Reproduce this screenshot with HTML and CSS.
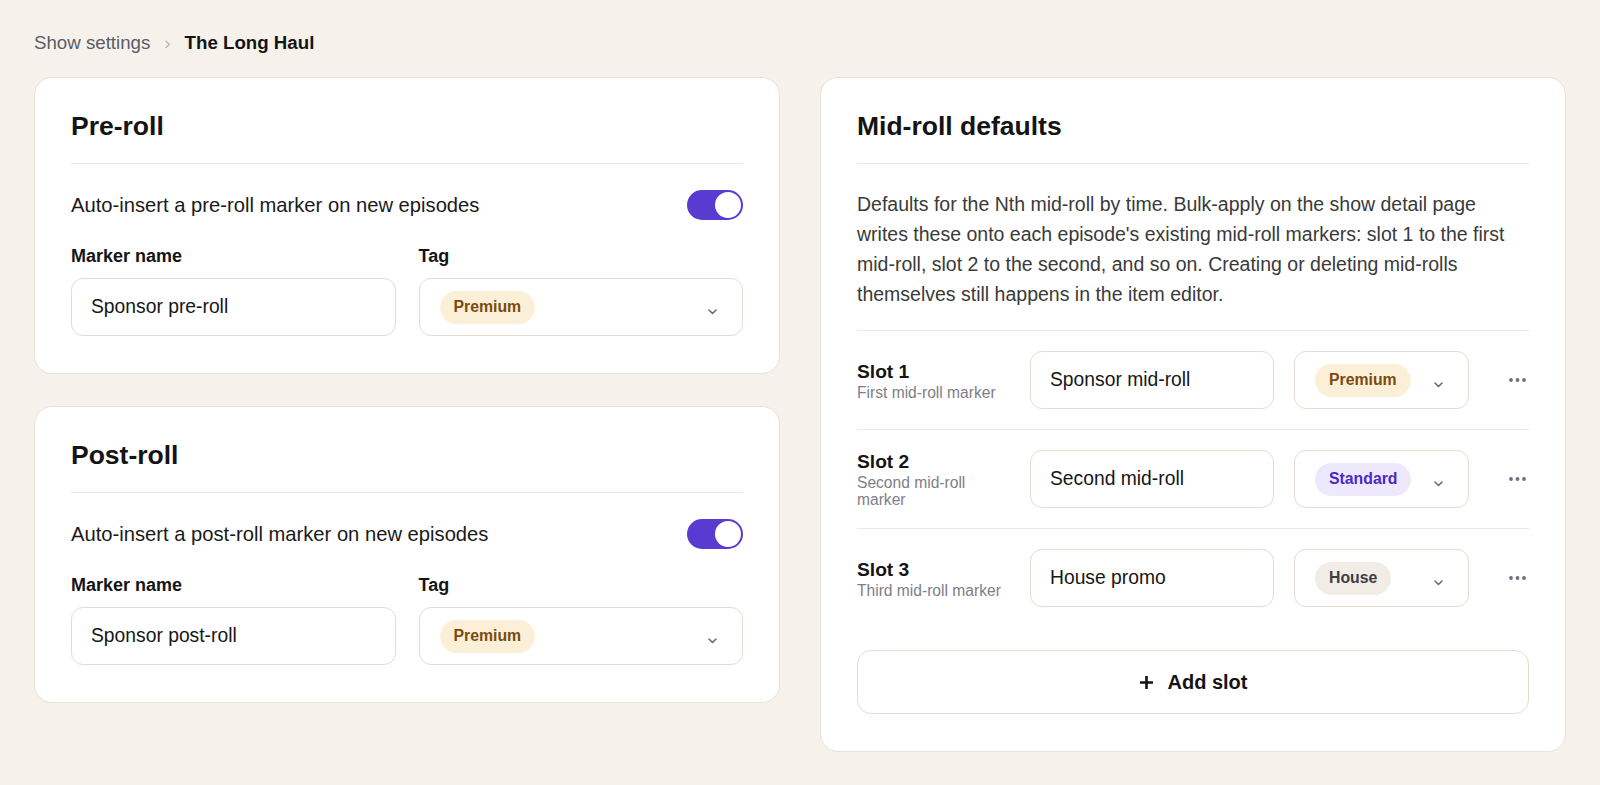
FILE: index.html
```html
<!DOCTYPE html>
<html lang="en">
<head>
    <meta charset="UTF-8">
    <meta name="viewport" content="width=device-width, initial-scale=1.0">
    <title>The Long Haul - Show settings</title>
    <link rel="stylesheet" href="styles.css">
</head>
<body>
    <div class="page">
        <nav class="crumbs">
            <a class="crumb-link" href="#">Show settings</a>
            <span class="crumb-sep">›</span>
            <span class="crumb-current">The Long Haul</span>
        </nav>

        <div class="columns">
            <div class="stack">
                <section class="card">
                    <div class="card-head">
                        <h2>Pre-roll</h2>
                    </div>
                    <div class="toggle-row">
                        <span>Auto-insert a pre-roll marker on new episodes</span>
                        <button class="toggle on" type="button"><span class="knob"></span></button>
                    </div>
                    <div class="field-grid">
                        <div class="field">
                            <label for="preName">Marker name</label>
                            <input type="text" id="preName" class="text-input" value="Sponsor pre-roll">
                        </div>
                        <div class="field">
                            <label>Tag</label>
                            <div class="select">
                                <span class="pill premium">Premium</span>
                                <svg class="chev" width="9" height="6" viewBox="0 0 9 6"><path d="M1 1l3.5 3.5L8 1" fill="none" stroke="currentColor" stroke-width="1.6" stroke-linecap="round" stroke-linejoin="round"/></svg>
                            </div>
                        </div>
                    </div>
                </section>

                <section class="card">
                    <div class="card-head">
                        <h2>Post-roll</h2>
                    </div>
                    <div class="toggle-row">
                        <span>Auto-insert a post-roll marker on new episodes</span>
                        <button class="toggle on" type="button"><span class="knob"></span></button>
                    </div>
                    <div class="field-grid">
                        <div class="field">
                            <label for="postName">Marker name</label>
                            <input type="text" id="postName" class="text-input" value="Sponsor post-roll">
                        </div>
                        <div class="field">
                            <label>Tag</label>
                            <div class="select">
                                <span class="pill premium">Premium</span>
                                <svg class="chev" width="9" height="6" viewBox="0 0 9 6"><path d="M1 1l3.5 3.5L8 1" fill="none" stroke="currentColor" stroke-width="1.6" stroke-linecap="round" stroke-linejoin="round"/></svg>
                            </div>
                        </div>
                    </div>
                </section>
            </div>

            <section class="card">
                <div class="card-head">
                    <h2>Mid-roll defaults</h2>
                </div>
                <p class="intro">Defaults for the Nth mid-roll by time. Bulk-apply on the show detail page writes these onto each episode's existing mid-roll markers: slot 1 to the first mid-roll, slot 2 to the second, and so on. Creating or deleting mid-rolls themselves still happens in the item editor.</p>

                <div class="slots">
                    <div class="slot">
                        <div class="slot-label">
                            <strong>Slot 1</strong>
                            <small>First mid-roll marker</small>
                        </div>
                        <input type="text" class="text-input" value="Sponsor mid-roll">
                        <div class="select">
                            <span class="pill premium">Premium</span>
                            <svg class="chev" width="9" height="6" viewBox="0 0 9 6"><path d="M1 1l3.5 3.5L8 1" fill="none" stroke="currentColor" stroke-width="1.6" stroke-linecap="round" stroke-linejoin="round"/></svg>
                        </div>
                        <button class="more" type="button">
                            <svg width="17" height="4" viewBox="0 0 17 4"><circle cx="2" cy="2" r="1.9"/><circle cx="8.5" cy="2" r="1.9"/><circle cx="15" cy="2" r="1.9"/></svg>
                        </button>
                    </div>
                    <div class="slot">
                        <div class="slot-label">
                            <strong>Slot 2</strong>
                            <small>Second mid-roll marker</small>
                        </div>
                        <input type="text" class="text-input" value="Second mid-roll">
                        <div class="select">
                            <span class="pill standard">Standard</span>
                            <svg class="chev" width="9" height="6" viewBox="0 0 9 6"><path d="M1 1l3.5 3.5L8 1" fill="none" stroke="currentColor" stroke-width="1.6" stroke-linecap="round" stroke-linejoin="round"/></svg>
                        </div>
                        <button class="more" type="button">
                            <svg width="17" height="4" viewBox="0 0 17 4"><circle cx="2" cy="2" r="1.9"/><circle cx="8.5" cy="2" r="1.9"/><circle cx="15" cy="2" r="1.9"/></svg>
                        </button>
                    </div>
                    <div class="slot">
                        <div class="slot-label">
                            <strong>Slot 3</strong>
                            <small>Third mid-roll marker</small>
                        </div>
                        <input type="text" class="text-input" value="House promo">
                        <div class="select">
                            <span class="pill house">House</span>
                            <svg class="chev" width="9" height="6" viewBox="0 0 9 6"><path d="M1 1l3.5 3.5L8 1" fill="none" stroke="currentColor" stroke-width="1.6" stroke-linecap="round" stroke-linejoin="round"/></svg>
                        </div>
                        <button class="more" type="button">
                            <svg width="17" height="4" viewBox="0 0 17 4"><circle cx="2" cy="2" r="1.9"/><circle cx="8.5" cy="2" r="1.9"/><circle cx="15" cy="2" r="1.9"/></svg>
                        </button>
                    </div>
                </div>

                <button class="add-slot" type="button">
                    <svg width="15" height="15" viewBox="0 0 15 15"><path d="M7.5 1v13M1 7.5h13" fill="none" stroke="currentColor" stroke-width="2.6"/></svg>
                    Add slot
                </button>
            </section>
        </div>
    </div>
</body>
</html>
```

FILE: styles.css
```css
* {
    box-sizing: border-box;
}
body {
    margin: 0;
    background: #f6f2eb;
    color: #161616;
    font-family: "Liberation Sans", Arial, sans-serif;
}
.page {
    padding: 32px 34px;
}

/* breadcrumb */
.crumbs {
    display: flex;
    align-items: center;
    gap: 14px;
    font-size: 18.7px;
    line-height: 22px;
    margin-bottom: 23px;
}
.crumb-link {
    color: #5b5b66;
    text-decoration: none;
}
.crumb-sep {
    color: #bfb7a9;
}
.crumb-current {
    font-weight: bold;
    color: #141414;
}

/* layout */
.columns {
    display: grid;
    grid-template-columns: 1fr 1fr;
    gap: 40px;
    align-items: start;
}
.stack {
    display: flex;
    flex-direction: column;
    gap: 32px;
}
.card {
    background: #fff;
    border: 1px solid #e9e2d6;
    border-radius: 18px;
    padding: 32px 36px 37px;
}
.card-head {
    padding-bottom: 21px;
    border-bottom: 1px solid #eee8de;
}
.card-head h2 {
    margin: 0;
    font-size: 26.5px;
    line-height: 32px;
    color: #141414;
}

/* toggle */
.toggle-row {
    display: flex;
    align-items: center;
    justify-content: space-between;
    margin-top: 26px;
    font-size: 20.2px;
    color: #1a1a1a;
}
.toggle {
    width: 56px;
    height: 30px;
    padding: 0;
    border: none;
    border-radius: 15px;
    background: #d9d2c6;
    position: relative;
    cursor: pointer;
}
.toggle.on {
    background: #5a3bd1;
}
.knob {
    position: absolute;
    top: 2px;
    left: 2px;
    width: 26px;
    height: 26px;
    border-radius: 50%;
    background: #fff;
}
.toggle.on .knob {
    left: 28px;
}

/* fields */
.field-grid {
    display: grid;
    grid-template-columns: 1fr 1fr;
    gap: 23px;
    margin-top: 25px;
}
.field label {
    display: block;
    font-size: 18px;
    line-height: 22px;
    font-weight: bold;
    margin-bottom: 11px;
    color: #141414;
}
.text-input {
    display: block;
    width: 100%;
    height: 58px;
    padding: 0 19px;
    border: 1px solid #e4ddd0;
    border-radius: 12px;
    background: #fff;
    font-family: inherit;
    font-size: 19.3px;
    color: #161616;
    outline: none;
}
.select {
    display: flex;
    align-items: center;
    justify-content: space-between;
    height: 58px;
    padding: 0 25px 0 20px;
    border: 1px solid #e4ddd0;
    border-radius: 12px;
    background: #fff;
    cursor: pointer;
}
.chev {
    color: #6c6c7a;
    margin-top: 9px;
}

/* tag pills */
.pill {
    display: inline-flex;
    align-items: center;
    height: 33px;
    padding: 0 14px;
    border-radius: 17px;
    font-size: 15.8px;
    font-weight: bold;
}
.premium {
    background: #fcefd7;
    color: #7a4a10;
}
.standard {
    background: #ede8fc;
    color: #4a29c4;
}
.house {
    background: #f1ede6;
    color: #3d3d48;
}

/* mid-roll slots */
.intro {
    margin: 25px 0 21px;
    font-size: 19.5px;
    line-height: 30px;
    color: #3a3a3a;
}
.slot {
    display: grid;
    grid-template-columns: 153px 1fr 175px 40px;
    gap: 20px;
    align-items: center;
    padding: 20px 0;
    border-top: 1px solid #eee8de;
}
.slot-label strong {
    display: block;
    font-size: 19.2px;
    line-height: 23px;
    color: #141414;
}
.slot-label small {
    display: block;
    margin-top: 1px;
    font-size: 15.6px;
    line-height: 17px;
    color: #7e7e89;
}
.more {
    justify-self: end;
    width: 24px;
    height: 24px;
    padding: 0;
    border: none;
    background: none;
    color: #6e6e80;
    fill: #6e6e80;
    display: flex;
    align-items: center;
    justify-content: center;
    cursor: pointer;
}
.add-slot {
    display: flex;
    align-items: center;
    justify-content: center;
    gap: 14px;
    width: 100%;
    height: 64px;
    margin-top: 23px;
    border: 1px solid #e4ddd0;
    border-radius: 14px;
    background: #fff;
    font-family: inherit;
    font-size: 20px;
    font-weight: bold;
    color: #141414;
    cursor: pointer;
}
```
